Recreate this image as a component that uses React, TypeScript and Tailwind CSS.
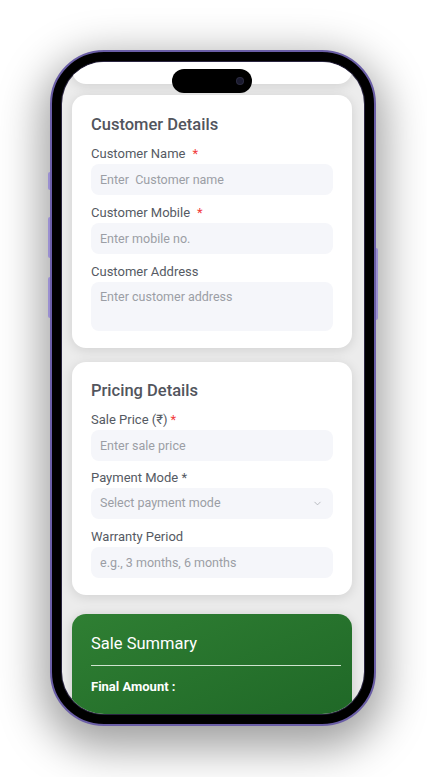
import { ChevronDown } from 'lucide-react'

const CUSTOMER_FIELDS = [
  { label: 'Customer Name', required: true, placeholder: 'Enter\u00a0 Customer name' },
  { label: 'Customer Mobile', required: true, placeholder: 'Enter mobile no.' },
]

function Label({ text, required, tight }: { text: string; required?: boolean; tight?: boolean }) {
  return (
    <p className="text-[13px] leading-[18px] text-[#555a63]">
      {text}
      {required && <span className={tight ? 'ml-[3px] text-[#f23b3b]' : 'ml-[7px] text-[#f23b3b]'}>*</span>}
    </p>
  )
}

function Field({ placeholder }: { placeholder: string }) {
  return (
    <input
      readOnly
      placeholder={placeholder}
      className="mt-[1px] block h-[31px] w-full rounded-[8px] bg-[#f5f6fa] px-[9px] text-[12.5px] outline-none placeholder:text-[#9b9ea5]"
    />
  )
}

export default function App() {
  return (
    <div className="h-[777px] w-[427px] bg-white pl-[50px] pt-[50px] font-['Roboto',sans-serif]">
      {/* phone frame */}
      <div className="relative h-[676px] w-[326px] rounded-[54px] border-[2px] border-[#6a5ea6] bg-black p-[10px] shadow-[0_14px_44px_8px_rgba(0,0,0,0.38)]">
        {/* side buttons */}
        <span className="absolute left-[-4px] top-[120px] h-[18px] w-[2px] rounded-l bg-[#9a8fd0]" />
        <span className="absolute left-[-4px] top-[165px] h-[41px] w-[2px] rounded-l bg-[#9a8fd0]" />
        <span className="absolute left-[-4px] top-[225px] h-[41px] w-[2px] rounded-l bg-[#9a8fd0]" />
        <span className="absolute right-[-4px] top-[196px] h-[72px] w-[2px] rounded-r bg-[#9a8fd0]" />

        {/* screen */}
        <div className="relative h-full w-full overflow-hidden rounded-[42px] bg-[#ececec] ring-1 ring-[#2a2540]">
          {/* dynamic island */}
          <div className="absolute left-[110px] top-[7px] z-10 flex h-[24px] w-[80px] items-center justify-end rounded-full bg-black pr-[9px]">
            <span className="h-[6px] w-[6px] rounded-full bg-[#1a1a2e] ring-1 ring-[#2b2b40]" />
          </div>

          <div className="flex flex-col pl-[10px] pr-[12px]">
            {/* previous card, scrolled up */}
            <div className="h-[22px] rounded-b-[14px] bg-white shadow-[0_2px_12px_rgba(0,0,0,0.12)]" />

            {/* Customer Details */}
            <div className="mt-[11px] rounded-[14px] bg-white px-[19px] pb-[17px] pt-[18px] shadow-[0_2px_12px_rgba(0,0,0,0.12)]">
              <h2 className="text-[16.5px] font-medium leading-[24px] text-[#52555d]">Customer Details</h2>
              <div className="mt-[8px] flex flex-col gap-[9px]">
                {CUSTOMER_FIELDS.map(({ label, required, placeholder }) => (
                  <div key={label}>
                    <Label text={label} required={required} />
                    <Field placeholder={placeholder} />
                  </div>
                ))}
                <div>
                  <Label text="Customer Address" />
                  <textarea
                    readOnly
                    placeholder="Enter customer address"
                    className="mt-[1px] block h-[49px] w-full resize-none rounded-[8px] bg-[#f5f6fa] px-[9px] pt-[7px] text-[12.5px] leading-[16px] outline-none placeholder:text-[#9b9ea5]"
                  />
                </div>
              </div>
            </div>

            {/* Pricing Details */}
            <div className="mt-[14px] rounded-[14px] bg-white px-[19px] pb-[17px] pt-[17px] shadow-[0_2px_12px_rgba(0,0,0,0.12)]">
              <h2 className="text-[16.5px] font-medium leading-[24px] text-[#52555d]">Pricing Details</h2>
              <div className="mt-[8px] flex flex-col gap-[8px]">
                <div>
                  <Label text="Sale Price (₹)" required tight />
                  <Field placeholder="Enter sale price" />
                </div>
                <div>
                  <p className="text-[13px] leading-[18px] text-[#555a63]">Payment Mode *</p>
                  <div className="mt-[1px] flex h-[31px] items-center justify-between rounded-[8px] bg-[#f5f6fa] pl-[9px] pr-[10px]">
                    <span className="text-[12.5px] text-[#9b9ea5]">Select payment mode</span>
                    <ChevronDown size={11} strokeWidth={1.6} className="text-[#a3a6ad]" />
                  </div>
                </div>
                <div className="mt-[1px]">
                  <Label text="Warranty Period" />
                  <Field placeholder="e.g., 3 months, 6 months" />
                </div>
              </div>
            </div>

            {/* Sale Summary */}
            <div className="mt-[19px] h-[120px] rounded-[14px] bg-linear-to-br from-[#2f7f33] to-[#1e6626] pl-[19px] pr-[11px] pt-[18px] shadow-[0_2px_12px_rgba(0,0,0,0.15)]">
              <h2 className="text-[16.5px] leading-[24px] text-white">Sale Summary</h2>
              <div className="mt-[9px] h-px bg-[#cfe3cf]" />
              <p className="mt-[12px] text-[13px] font-bold leading-[18px] text-white">Final Amount :</p>
            </div>
          </div>
        </div>
      </div>
    </div>
  )
}
